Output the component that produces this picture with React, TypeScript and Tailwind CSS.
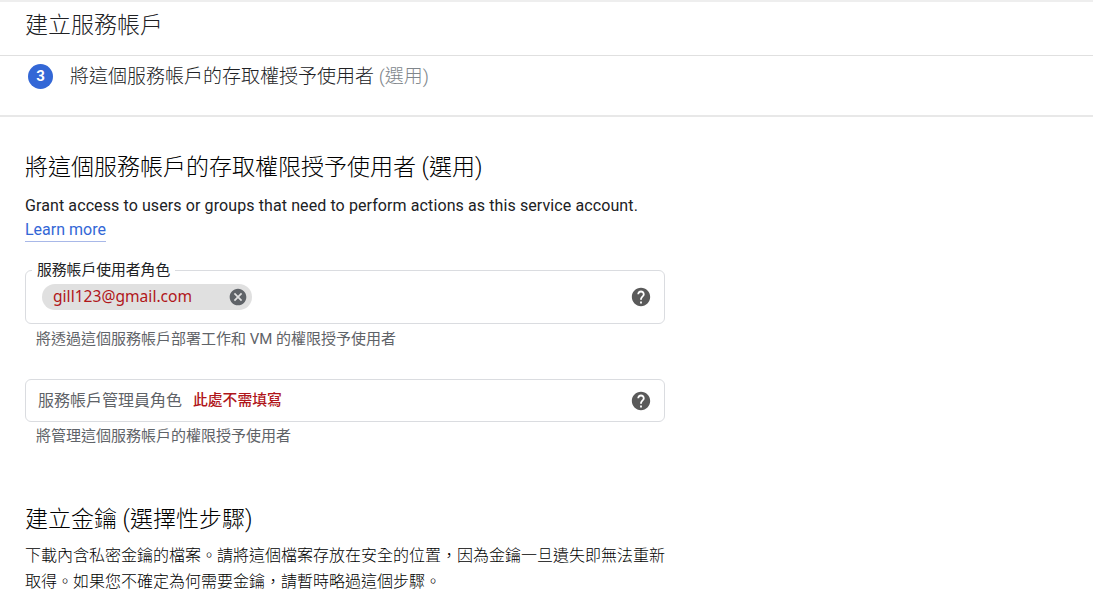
const font = "font-['Roboto','Noto_Sans_CJK_TC',sans-serif]";

function HelpIcon() {
  return (
    <svg viewBox="0 0 24 24" className="h-[22px] w-[22px] shrink-0 fill-[#5a5a5a]">
      <path d="M12 2C6.48 2 2 6.48 2 12s4.48 10 10 10 10-4.48 10-10S17.52 2 12 2zm1 17h-2v-2h2v2zm2.07-7.75l-.9.92C13.45 12.9 13 13.5 13 15h-2v-.5c0-1.1.45-2.1 1.17-2.83l1.24-1.26c.37-.36.59-.86.59-1.41 0-1.1-.9-2-2-2s-2 .9-2 2H8c0-2.21 1.79-4 4-4s4 1.79 4 4c0 .88-.36 1.68-.93 2.25z" />
    </svg>
  );
}

function CancelIcon() {
  return (
    <svg viewBox="0 0 24 24" className="h-[20px] w-[20px] shrink-0 fill-[#5f6368]">
      <path d="M12 2C6.47 2 2 6.47 2 12s4.47 10 10 10 10-4.47 10-10S17.53 2 12 2zm5 13.59L15.59 17 12 13.41 8.41 17 7 15.59 10.59 12 7 8.41 8.41 7 12 10.59 15.59 7 17 8.41 13.41 12 17 15.59z" />
    </svg>
  );
}

export default function App() {
  return (
    <div className={`${font} h-[615px] overflow-hidden bg-white text-[#202124]`}>
      {/* 上の帯 */}
      <div className="h-[56px] border-b border-[#e0e0e0] border-t-2 border-t-[#eeeeee] pl-[25px] pt-[9px]">
        <h1 className="text-[23px] leading-[30px] font-light text-[#202124]">建立服務帳戶</h1>
      </div>

      {/* ステップ */}
      <div className="h-[61px] border-b-2 border-[#e8e8e8] pl-[28px] pt-[8px] flex items-start gap-[17px]">
        <span className="flex h-[25px] w-[25px] items-center justify-center rounded-full bg-[#3367d6] text-[15px] font-bold text-white">
          3
        </span>
        <p className="text-[19px] leading-[26px] font-light text-[#202124]">
          將這個服務帳戶的存取權授予使用者 <span className="text-[#80868b]">(選用)</span>
        </p>
      </div>

      <div className="pl-[25px] w-[665px]">
        <h2 className="mt-[35px] text-[23px] leading-[32px] font-light text-black">
          將這個服務帳戶的存取權限授予使用者 (選用)
        </h2>
        <p className="mt-[9px] text-[16px] tracking-[0.1px] leading-[25px] text-[#202124]">
          Grant access to users or groups that need to perform actions as this service account.
        </p>
        <a className="mt-[1px] block w-fit border-b border-[#a8b8e8] text-[16px] leading-[22px] text-[#3367d6]">Learn more</a>

        {/* 使用者角色 */}
        <div className="relative mt-[28px] flex h-[54px] items-center justify-between rounded-[6px] border border-[#dadce0] pl-[16px] pr-[12px]">
          <span className="absolute -top-[10px] left-[6px] bg-white px-[5px] text-[14.8px] leading-[18px] text-[#202124]">
            服務帳戶使用者角色
          </span>
          <div className="flex h-[26px] w-[210px] items-center justify-between rounded-full bg-[#e0e0e0] pl-[11px] pr-[4px]">
            <span className="font-['Noto_Sans',sans-serif] text-[15.6px] text-[#b0161a]">gill123@gmail.com</span>
            <CancelIcon />
          </div>
          <HelpIcon />
        </div>
        <p className="mt-[5px] pl-[11px] text-[15px] leading-[20px] text-[#5f6368]">
          將透過這個服務帳戶部署工作和 VM 的權限授予使用者
        </p>

        {/* 管理員角色 */}
        <div className="mt-[30px] flex h-[43px] items-center justify-between rounded-[6px] border border-[#dadce0] pl-[12px] pr-[12px]">
          <div className="flex items-center gap-[11px]">
            <span className="text-[16px] text-[#5f6368]">服務帳戶管理員角色</span>
            <span className="text-[14.8px] font-medium text-[#b0161a]">此處不需填寫</span>
          </div>
          <HelpIcon />
        </div>
        <p className="mt-[4px] pl-[11px] text-[15px] leading-[20px] text-[#5f6368]">將管理這個服務帳戶的權限授予使用者</p>

        <h2 className="mt-[58px] text-[23px] leading-[32px] font-light text-black">建立金鑰 (選擇性步驟)</h2>
        <p className="mt-[7px] text-[16px] leading-[26px] font-light text-black">
          下載內含私密金鑰的檔案。請將這個檔案存放在安全的位置，因為金鑰一旦遺失即無法重新取得。如果您不確定為何需要金鑰，請暫時略過這個步驟。
        </p>
      </div>
    </div>
  );
}
